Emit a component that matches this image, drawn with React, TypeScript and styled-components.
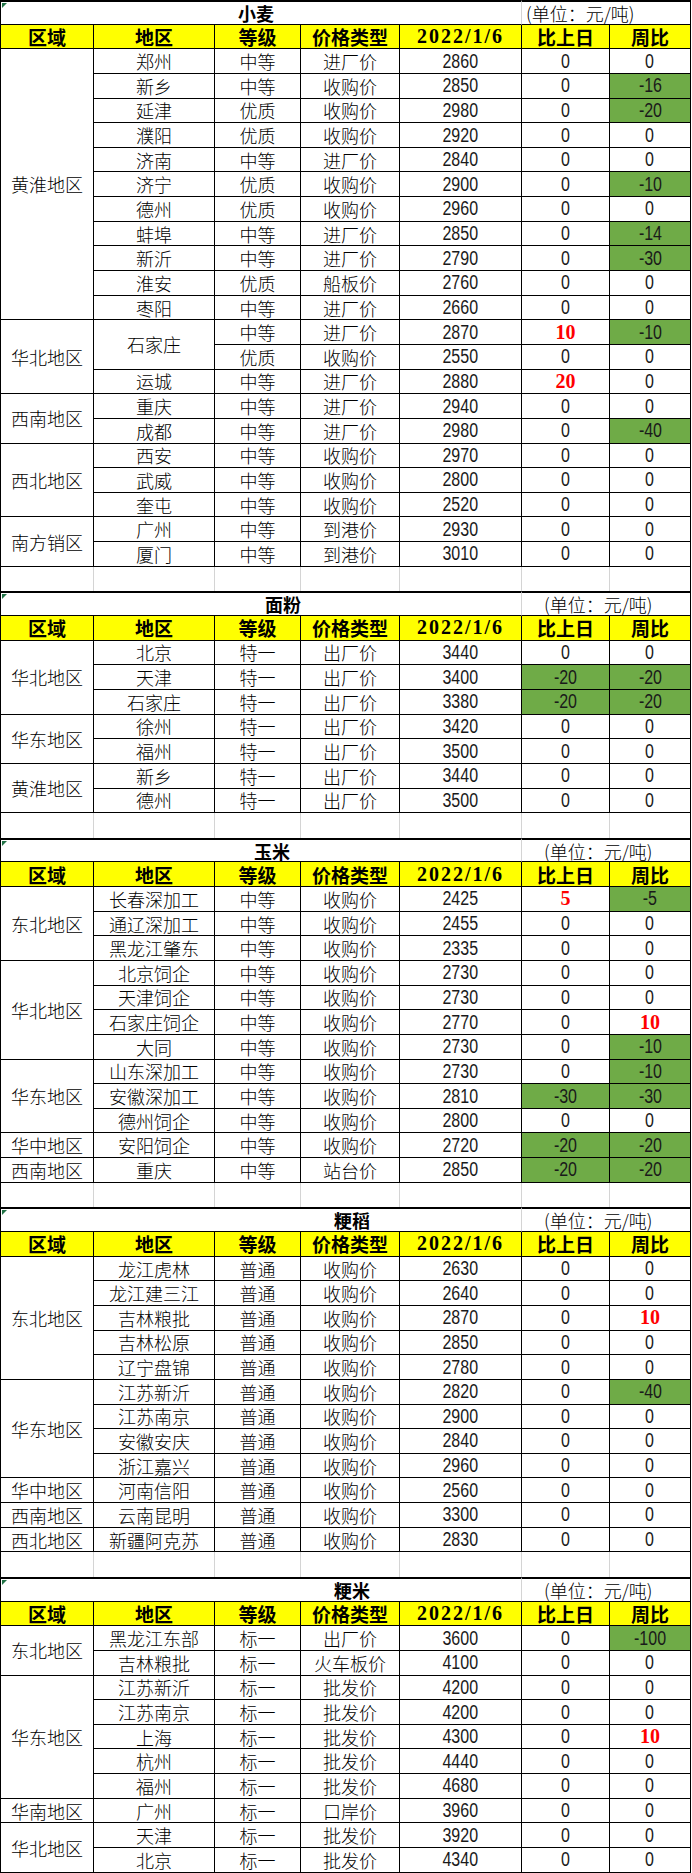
import React, { Fragment } from "react";
import styled, { createGlobalStyle } from "styled-components";

const GlobalStyle = createGlobalStyle`
  body {
    margin: 0;
    background: #fff;
  }
`;

const ROW = 1873 / 76;

const Sheet = styled.div`
  width: 692px;
  font-family: "Noto Sans CJK SC", sans-serif;
  color: #000;
`;

const Section = styled.section`
  display: grid;
  grid-template-columns: 93px 121px 86px 99px 122px 88px 81px;
  grid-auto-rows: ${ROW}px;
  border-left: 1px solid #000;
`;

const Cell = styled.div<{ $span?: number }>`
  display: flex;
  align-items: center;
  justify-content: center;
  box-sizing: border-box;
  border-right: 1px solid #000;
  border-bottom: 1px solid #000;
  font-size: 18px;
  font-weight: 300;
  white-space: nowrap;
  ${(p) => (p.$span && p.$span > 1 ? `grid-row: span ${p.$span};` : "")}
`;

const NumCell = styled(Cell)<{ $tone?: "up" | "down" }>`
  font-family: "Liberation Sans", sans-serif;
  font-size: 20px;
  font-weight: 400;
  color: #1a1a1a;
  background: ${(p) => (p.$tone === "down" ? "#6fab47" : "transparent")};
  ${(p) =>
    p.$tone === "up" &&
    `color: #ff0000;
     font-family: "Liberation Serif", serif;
     font-weight: 700;`}
`;

/* narrow, tall digits like the sheet's default font */
const Digits = styled.span<{ $plain?: boolean }>`
  display: inline-block;
  transform: ${(p) => (p.$plain ? "none" : "scaleX(0.8)")};
`;

const TitleCell = styled.div<{ $indent: number }>`
  position: relative;
  grid-column: 1 / 6;
  display: flex;
  align-items: center;
  box-sizing: border-box;
  padding-left: ${(p) => p.$indent}px;
  border-top: 2px solid #000;
  border-bottom: 1px solid #000;
  border-right: 1px solid #d4d4d4;
  font-size: 18px;
  font-weight: 700;
`;

const Marker = styled.span`
  position: absolute;
  left: 1px;
  top: 1px;
  width: 0;
  height: 0;
  border-top: 5px solid #217346;
  border-right: 5px solid transparent;
`;

const UnitCell = styled.div<{ $indent: number }>`
  grid-column: 6 / 8;
  display: flex;
  align-items: center;
  box-sizing: border-box;
  padding-left: ${(p) => p.$indent}px;
  border-top: 2px solid #000;
  border-bottom: 1px solid #000;
  border-right: 1px solid #000;
  font-size: 18px;
  font-weight: 300;
  white-space: nowrap;
`;

const HeadCell = styled(Cell)<{ $date?: boolean }>`
  background: #ffff00;
  font-size: 19px;
  font-weight: 700;
  ${(p) =>
    p.$date &&
    `font-family: "Liberation Serif", serif;
     font-size: 20px;
     letter-spacing: 2px;`}
`;

const GapCell = styled.div<{ $last?: boolean }>`
  border-right: 1px solid ${(p) => (p.$last ? "#000" : "#d4d4d4")};
`;

type Row = {
  place: string | null;
  span?: number;
  grade: string;
  kind: string;
  price: string;
  day: string;
  week: string;
};

type Group = { region: string; rows: Row[] };

type Table = {
  title: string;
  titleIndent: number;
  unitIndent: number;
  groups: Group[];
  gap: boolean;
};

const r = (
  place: string | null,
  grade: string,
  kind: string,
  price: string,
  day: string,
  week: string,
  span = 1
): Row => ({ place, grade, kind, price, day, week, span });

const tables: Table[] = [
  {
    title: "小麦",
    titleIndent: 237,
    unitIndent: 4,
    gap: true,
    groups: [
      {
        region: "黄淮地区",
        rows: [
          r("郑州", "中等", "进厂价", "2860", "0", "0"),
          r("新乡", "中等", "收购价", "2850", "0", "-16"),
          r("延津", "优质", "收购价", "2980", "0", "-20"),
          r("濮阳", "优质", "收购价", "2920", "0", "0"),
          r("济南", "中等", "进厂价", "2840", "0", "0"),
          r("济宁", "优质", "收购价", "2900", "0", "-10"),
          r("德州", "优质", "收购价", "2960", "0", "0"),
          r("蚌埠", "中等", "进厂价", "2850", "0", "-14"),
          r("新沂", "中等", "进厂价", "2790", "0", "-30"),
          r("淮安", "优质", "船板价", "2760", "0", "0"),
          r("枣阳", "中等", "进厂价", "2660", "0", "0"),
        ],
      },
      {
        region: "华北地区",
        rows: [
          r("石家庄", "中等", "进厂价", "2870", "10", "-10", 2),
          r(null, "优质", "收购价", "2550", "0", "0"),
          r("运城", "中等", "进厂价", "2880", "20", "0"),
        ],
      },
      {
        region: "西南地区",
        rows: [
          r("重庆", "中等", "进厂价", "2940", "0", "0"),
          r("成都", "中等", "进厂价", "2980", "0", "-40"),
        ],
      },
      {
        region: "西北地区",
        rows: [
          r("西安", "中等", "收购价", "2970", "0", "0"),
          r("武威", "中等", "收购价", "2800", "0", "0"),
          r("奎屯", "中等", "收购价", "2520", "0", "0"),
        ],
      },
      {
        region: "南方销区",
        rows: [
          r("广州", "中等", "到港价", "2930", "0", "0"),
          r("厦门", "中等", "到港价", "3010", "0", "0"),
        ],
      },
    ],
  },
  {
    title: "面粉",
    titleIndent: 264,
    unitIndent: 22,
    gap: true,
    groups: [
      {
        region: "华北地区",
        rows: [
          r("北京", "特一", "出厂价", "3440", "0", "0"),
          r("天津", "特一", "出厂价", "3400", "-20", "-20"),
          r("石家庄", "特一", "出厂价", "3380", "-20", "-20"),
        ],
      },
      {
        region: "华东地区",
        rows: [
          r("徐州", "特一", "出厂价", "3420", "0", "0"),
          r("福州", "特一", "出厂价", "3500", "0", "0"),
        ],
      },
      {
        region: "黄淮地区",
        rows: [
          r("新乡", "特一", "出厂价", "3440", "0", "0"),
          r("德州", "特一", "出厂价", "3500", "0", "0"),
        ],
      },
    ],
  },
  {
    title: "玉米",
    titleIndent: 253,
    unitIndent: 22,
    gap: true,
    groups: [
      {
        region: "东北地区",
        rows: [
          r("长春深加工", "中等", "收购价", "2425", "5", "-5"),
          r("通辽深加工", "中等", "收购价", "2455", "0", "0"),
          r("黑龙江肇东", "中等", "收购价", "2335", "0", "0"),
        ],
      },
      {
        region: "华北地区",
        rows: [
          r("北京饲企", "中等", "收购价", "2730", "0", "0"),
          r("天津饲企", "中等", "收购价", "2730", "0", "0"),
          r("石家庄饲企", "中等", "收购价", "2770", "0", "10"),
          r("大同", "中等", "收购价", "2730", "0", "-10"),
        ],
      },
      {
        region: "华东地区",
        rows: [
          r("山东深加工", "中等", "收购价", "2730", "0", "-10"),
          r("安徽深加工", "中等", "收购价", "2810", "-30", "-30"),
          r("德州饲企", "中等", "收购价", "2800", "0", "0"),
        ],
      },
      {
        region: "华中地区",
        rows: [r("安阳饲企", "中等", "收购价", "2720", "-20", "-20")],
      },
      {
        region: "西南地区",
        rows: [r("重庆", "中等", "站台价", "2850", "-20", "-20")],
      },
    ],
  },
  {
    title: "粳稻",
    titleIndent: 333,
    unitIndent: 22,
    gap: true,
    groups: [
      {
        region: "东北地区",
        rows: [
          r("龙江虎林", "普通", "收购价", "2630", "0", "0"),
          r("龙江建三江", "普通", "收购价", "2640", "0", "0"),
          r("吉林粮批", "普通", "收购价", "2870", "0", "10"),
          r("吉林松原", "普通", "收购价", "2850", "0", "0"),
          r("辽宁盘锦", "普通", "收购价", "2780", "0", "0"),
        ],
      },
      {
        region: "华东地区",
        rows: [
          r("江苏新沂", "普通", "收购价", "2820", "0", "-40"),
          r("江苏南京", "普通", "收购价", "2900", "0", "0"),
          r("安徽安庆", "普通", "收购价", "2840", "0", "0"),
          r("浙江嘉兴", "普通", "收购价", "2960", "0", "0"),
        ],
      },
      {
        region: "华中地区",
        rows: [r("河南信阳", "普通", "收购价", "2560", "0", "0")],
      },
      {
        region: "西南地区",
        rows: [r("云南昆明", "普通", "收购价", "3300", "0", "0")],
      },
      {
        region: "西北地区",
        rows: [r("新疆阿克苏", "普通", "收购价", "2830", "0", "0")],
      },
    ],
  },
  {
    title: "粳米",
    titleIndent: 333,
    unitIndent: 22,
    gap: false,
    groups: [
      {
        region: "东北地区",
        rows: [
          r("黑龙江东部", "标一", "出厂价", "3600", "0", "-100"),
          r("吉林粮批", "标一", "火车板价", "4100", "0", "0"),
        ],
      },
      {
        region: "华东地区",
        rows: [
          r("江苏新沂", "标一", "批发价", "4200", "0", "0"),
          r("江苏南京", "标一", "批发价", "4200", "0", "0"),
          r("上海", "标一", "批发价", "4300", "0", "10"),
          r("杭州", "标一", "批发价", "4440", "0", "0"),
          r("福州", "标一", "批发价", "4680", "0", "0"),
        ],
      },
      {
        region: "华南地区",
        rows: [r("广州", "标一", "口岸价", "3960", "0", "0")],
      },
      {
        region: "华北地区",
        rows: [
          r("天津", "标一", "批发价", "3920", "0", "0"),
          r("北京", "标一", "批发价", "4340", "0", "0"),
        ],
      },
    ],
  },
];

const headers = ["区域", "地区", "等级", "价格类型", "2022/1/6", "比上日", "周比"];

const toneOf = (v: string): "up" | "down" | undefined => {
  if (v.startsWith("-")) return "down";
  if (v !== "0") return "up";
  return undefined;
};

const Change = ({ value }: { value: string }) => {
  const tone = toneOf(value);
  return (
    <NumCell $tone={tone}>
      <Digits $plain={tone === "up"}>{value}</Digits>
    </NumCell>
  );
};

const PriceTable = ({ table }: { table: Table }) => (
  <Section>
    <TitleCell $indent={table.titleIndent}>
      <Marker />
      {table.title}
    </TitleCell>
    <UnitCell $indent={table.unitIndent}>(单位：元/吨)</UnitCell>
    {headers.map((h) => (
      <HeadCell key={h} $date={h.includes("/")}>
        {h}
      </HeadCell>
    ))}
    {table.groups.map((g) =>
      g.rows.map((row, i) => (
        <Fragment key={g.region + i}>
          {i === 0 && <Cell $span={g.rows.length}>{g.region}</Cell>}
          {row.place !== null && <Cell $span={row.span}>{row.place}</Cell>}
          <Cell>{row.grade}</Cell>
          <Cell>{row.kind}</Cell>
          <NumCell>
            <Digits>{row.price}</Digits>
          </NumCell>
          <Change value={row.day} />
          <Change value={row.week} />
        </Fragment>
      ))
    )}
    {table.gap &&
      headers.map((h, i) => <GapCell key={"gap" + h} $last={i === headers.length - 1} />)}
  </Section>
);

export default function App() {
  return (
    <>
      <GlobalStyle />
      <Sheet>
        {tables.map((t) => (
          <PriceTable key={t.title} table={t} />
        ))}
      </Sheet>
    </>
  );
}
